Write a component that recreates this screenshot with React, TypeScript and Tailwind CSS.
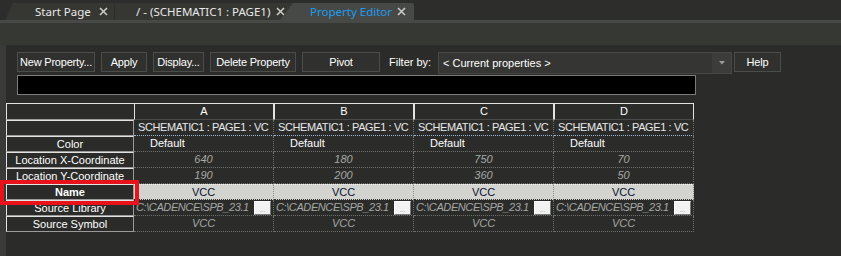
import React from 'react';

const cols = ['A', 'B', 'C', 'D'];
const xs = ['640', '180', '750', '70'];
const ys = ['190', '200', '360', '50'];

const CloseX: React.FC = () => (
    <svg width="9" height="9" viewBox="0 0 9 9" className="shrink-0">
        <path d="M1 1 L8 8 M8 1 L1 8" stroke="#c9cbc8" strokeWidth="1.6" />
    </svg>
);

const ToolButton: React.FC<{ label: string; w: string }> = ({ label, w }) => (
    <div className={`${w} h-[20px] flex items-center justify-center whitespace-nowrap border border-[#4b4d49] bg-[#30312f] text-[11px] tracking-[-0.2px] text-white`}>
        {label}
    </div>
);

const RowHead: React.FC<{ label: string; bold?: boolean }> = ({ label, bold }) => (
    <div
        className={`h-[16px] flex items-center justify-center whitespace-nowrap border border-[#e2e2e2] border-b-[#9a9a9a] border-r-[#9a9a9a] bg-[#2b2c2a] text-white ${bold ? 'font-bold' : ''}`}
    >
        {label}
    </div>
);

const Cell: React.FC<{ children?: React.ReactNode; className?: string }> = ({ children, className = '' }) => (
    <div className={`h-[16px] flex items-center overflow-hidden whitespace-nowrap border-r border-b border-dotted border-[#6e706c] ${className}`}>
        {children}
    </div>
);

export default function App() {
    return (
        <div className="relative w-[841px] h-[256px] overflow-hidden bg-[#2d2e2c] flex flex-col font-['Liberation_Sans',Arial,sans-serif] text-[11px]">
            {/* tab strip */}
            <div className="h-[20px] flex items-end font-['Noto_Sans',sans-serif] text-[11.5px] whitespace-nowrap shrink-0">
                <div className="ml-[5px] w-[109px] h-[17px] bg-[#363733] [clip-path:polygon(8px_0,100%_0,100%_100%,0_100%)] flex items-center pl-[30px] pr-[6px] justify-between text-[#e8e8e8]">
                    <span>Start Page</span>
                    <CloseX />
                </div>
                <div className="ml-[1px] w-[178px] h-[17px] bg-[#363733] flex items-center pl-[21px] pr-[8px] justify-between text-[#e8e8e8]">
                    <span>/ - (SCHEMATIC1 : PAGE1)</span>
                    <CloseX />
                </div>
                <div className="-ml-[13px] w-[134px] h-[17px] bg-[#474946] [clip-path:polygon(13px_0,100%_0,100%_100%,0_100%)] rounded-tr-[2px] flex items-center pl-[30px] pr-[8px] justify-between text-[#1f9cf0]">
                    <span>Property Editor</span>
                    <CloseX />
                </div>
            </div>
            <div className="h-[3px] bg-[#474946] shrink-0" />
            <div className="h-[22px] bg-[#363834] shrink-0" />

            {/* main area */}
            <div className="flex-1 border-l-[6px] border-[#3a3b38] bg-[#2b2c2a]">
                <div className="pl-[11px] pt-[7px]">
                    <div className="flex items-start h-[22px]">
                        <ToolButton label="New Property..." w="w-[78px]" />
                        <div className="ml-[6px]"><ToolButton label="Apply" w="w-[46px]" /></div>
                        <div className="ml-[6px]"><ToolButton label="Display..." w="w-[51px]" /></div>
                        <div className="ml-[6px]"><ToolButton label="Delete Property" w="w-[86px]" /></div>
                        <div className="ml-[6px]"><ToolButton label="Pivot" w="w-[78px]" /></div>
                        <div className="ml-[9px] w-[49px] h-[20px] flex items-center whitespace-nowrap text-white">Filter by:</div>
                        <div className="w-[294px] h-[22px] flex border border-[#464844] bg-[#353633]">
                            <div className="flex-1 flex items-center pl-[4px] text-white">&lt; Current properties &gt;</div>
                            <div className="w-[19px] flex items-center justify-center bg-[#3c3d3a]">
                                <svg width="6" height="4" viewBox="0 0 6 4">
                                    <path d="M0 0 H6 L3 3.5 Z" fill="#9a9c98" />
                                </svg>
                            </div>
                        </div>
                        <div className="ml-[2px]"><ToolButton label="Help" w="w-[47px]" /></div>
                    </div>
                    <div className="mt-[1px] w-[679px] h-[20px] border border-[#7c7c7c] bg-black" />
                </div>

                {/* grid */}
                <div className="mt-[8px] grid grid-cols-[128px_140px_140px_140px_140px] w-[688px]">
                    <div className="h-[17px] border-l border-t border-[#e2e2e2] border-b border-b-[#9a9a9a] bg-[#2b2c2a]" />
                    {cols.map((c) => (
                        <div key={c} className="h-[17px] flex items-center justify-center border border-[#e2e2e2] border-b-[#4a4a4a] bg-[#2b2c2a] text-white">
                            {c}
                        </div>
                    ))}

                    <RowHead label="" />
                    {cols.map((c) => (
                        <Cell key={c} className="border-b-[#9db6d2] pl-[4px] tracking-[-0.4px] text-[#e8e8e8]">SCHEMATIC1 : PAGE1 : VC</Cell>
                    ))}

                    <RowHead label="Color" />
                    {cols.map((c) => (
                        <Cell key={c} className="pl-[16px] text-white">Default</Cell>
                    ))}

                    <RowHead label="Location X-Coordinate" />
                    {xs.map((v, i) => (
                        <Cell key={i} className="justify-center italic text-[#a6a8a4]">{v}</Cell>
                    ))}

                    <RowHead label="Location Y-Coordinate" />
                    {ys.map((v, i) => (
                        <Cell key={i} className="justify-center italic text-[#a6a8a4]">{v}</Cell>
                    ))}

                    <RowHead label="Name" bold />
                    {cols.map((c) => (
                        <div key={c} className="h-[16px] flex items-center justify-center bg-[#d3d4d0] border-t border-t-[#f0f0f0] border-b border-b-[#303030] border-r border-dotted border-r-[#8a8a8a] text-[#0c1230]">
                            VCC
                        </div>
                    ))}

                    <RowHead label="Source Library" />
                    {cols.map((c) => (
                        <Cell key={c} className="pl-[2px] pr-[2px] italic text-[#a6a8a4]">
                            <span className="flex-1 tracking-[-0.4px]">C:\CADENCE\SPB_23.1</span>
                            <span className="shrink-0 w-[17px] h-[14px] flex items-end justify-center bg-[#f2f2f2] border border-[#fdfdfd] border-b-[#777] border-r-[#777] text-[7px] not-italic text-[#999] leading-[9px]">...</span>
                        </Cell>
                    ))}

                    <RowHead label="Source Symbol" />
                    {cols.map((c) => (
                        <Cell key={c} className="justify-center italic text-[#a6a8a4]">VCC</Cell>
                    ))}
                </div>
            </div>

            {/* highlight */}
            <div className="absolute left-0 top-[180px] w-[139px] h-[25px] border-4 border-[#e8121b]" />
        </div>
    );
}
